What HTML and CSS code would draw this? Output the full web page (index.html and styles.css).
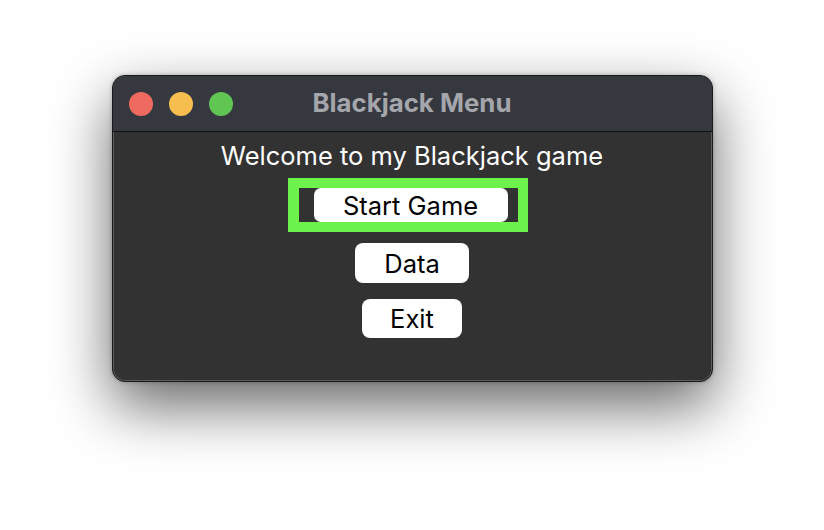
FILE: index.html
```html
<!DOCTYPE html>
<html>
<head>
<meta charset="utf-8">
<link rel="stylesheet" href="styles.css">
</head>
<body>
<div class="page">
  <div class="window">
    <div class="titlebar">
      <div class="lights">
        <span class="light red"></span>
        <span class="light yellow"></span>
        <span class="light green"></span>
      </div>
      <div class="title">Blackjack Menu</div>
    </div>
    <div class="content">
      <div class="welcome">Welcome to my Blackjack game</div>
      <div class="focus">
        <div class="btn btn-start">Start Game</div>
      </div>
      <div class="btn btn-data">Data</div>
      <div class="btn btn-exit">Exit</div>
    </div>
  </div>
</div>
</body>
</html>
```
FILE: styles.css
```css
html, body {
  margin: 0;
  padding: 0;
  background: #ffffff;
}
.page {
  width: 824px;
  height: 530px;
  display: flex;
  justify-content: center;
  align-items: flex-start;
  padding-top: 75px;
  box-sizing: border-box;
  font-family: Inter, "Noto Sans", sans-serif;
}
.window {
  width: 601px;
  height: 307px;
  box-sizing: border-box;
  border-radius: 13px;
  overflow: hidden;
  background: #323232;
  border: 1px solid #1a1a1a;
  box-shadow: inset 0 0 0 1px #5c5c5f, 0 24px 60px rgba(0,0,0,0.6), 0 0 4px rgba(0,0,0,0.25);
  display: flex;
  flex-direction: column;
}
.titlebar {
  height: 56px;
  flex: none;
  box-sizing: border-box;
  background: #363840;
  border-bottom: 1px solid #121212;
  display: flex;
  align-items: center;
  position: relative;
}
.lights {
  display: flex;
  gap: 16px;
  padding-left: 16px;
  padding-top: 1px;
}
.light {
  width: 24px;
  height: 24px;
  border-radius: 50%;
  display: block;
}
.red { background: #ee6a5f; }
.yellow { background: #f5be4f; }
.green { background: #61c554; }
.title {
  position: absolute;
  left: 0;
  right: 0;
  top: 13px;
  text-align: center;
  font-weight: 700;
  font-size: 25.8px;
  line-height: 28px;
  color: #a5a6ab;
}
.content {
  flex: 1;
  display: flex;
  flex-direction: column;
  align-items: center;
  padding-top: 11px;
}
.welcome {
  color: #ffffff;
  font-size: 25.5px;
  line-height: 26px;
  height: 26px;
}
.focus {
  margin-top: 9px;
  margin-left: -9px;
  width: 240px;
  height: 54px;
  box-sizing: border-box;
  border: 10px solid #6cf24a;
  border-left-width: 11px;
  background: #323232;
  display: flex;
  padding-left: 15px;
}
.btn {
  background: #ffffff;
  color: #000000;
  font-size: 25.5px;
  display: flex;
  align-items: center;
  justify-content: center;
  border-radius: 8px;
  box-sizing: border-box;
}
.btn-start {
  width: 194px;
  height: 34px;
  border-radius: 7px;
}
.btn-data {
  margin-top: 11px;
  width: 114px;
  height: 40px;
}
.btn-exit {
  margin-top: 16px;
  width: 100px;
  height: 39px;
}
```
